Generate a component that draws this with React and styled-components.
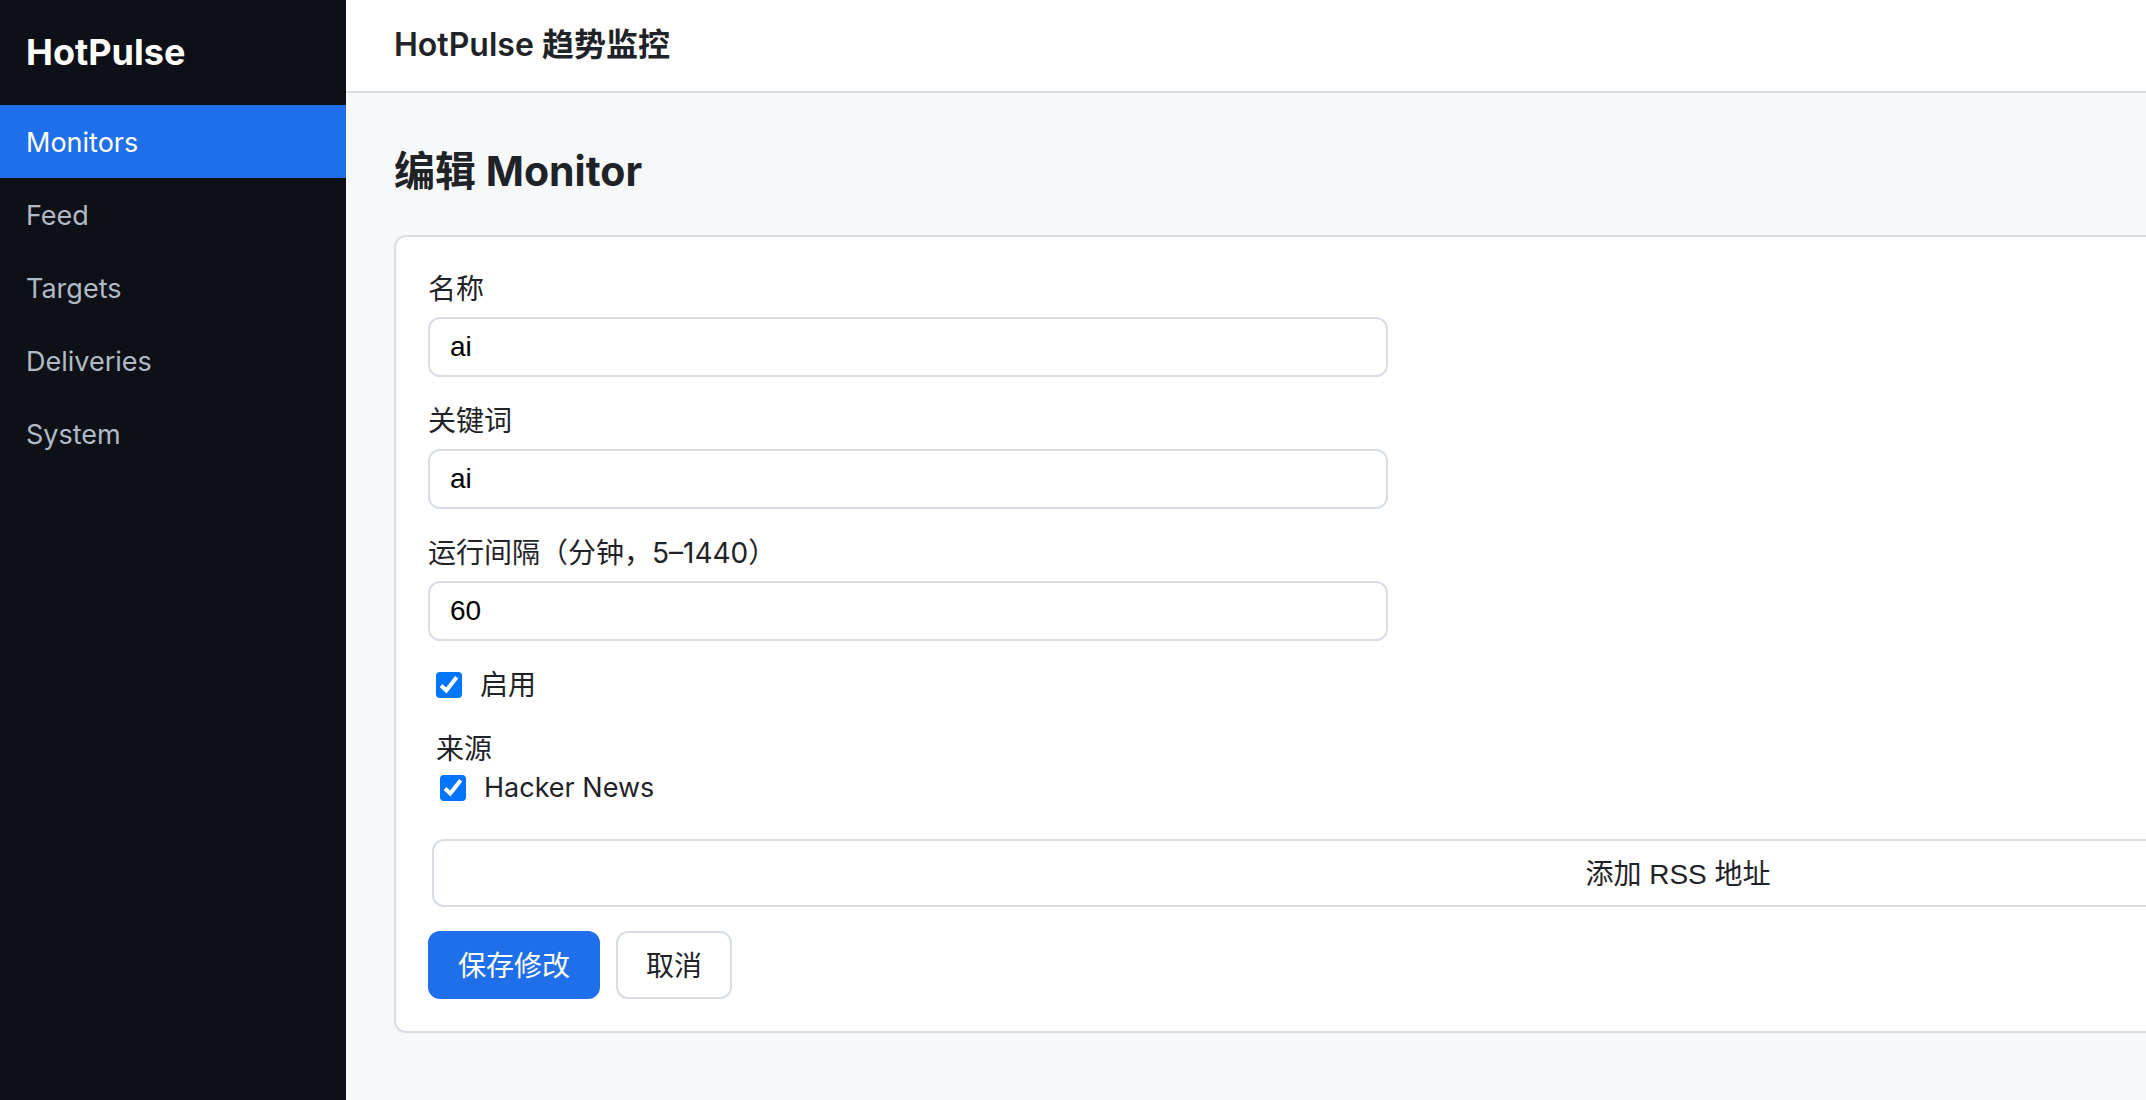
import React, { useState } from 'react';
import styled, { createGlobalStyle } from 'styled-components';

const GlobalStyle = createGlobalStyle`
  * {
    box-sizing: border-box;
  }

  body {
    margin: 0;
    overflow-x: hidden;
    background: #f6f8fa;
    color: #1f2328;
    font-family: Inter, 'Noto Sans CJK SC', sans-serif;
    font-size: 28px;
    line-height: 40px;
  }
`

const Layout = styled.div`
  display: flex;
  min-width: 3010px;
  min-height: 100vh;
`

const Sidebar = styled.aside`
  flex: 0 0 346px;
  background: #0d1117;
`

const Brand = styled.div`
  padding: 32px 26px;
  color: #fff;
  font-size: 36px;
  font-weight: 700;
  line-height: 41px;
`

const NavLink = styled.a`
  display: block;
  padding: 17px 26px 15px;
  background: ${props => (props.$active ? '#1f6feb' : 'transparent')};
  color: ${props => (props.$active ? '#fff' : '#b1bac4')};
  font-size: 27px;
  line-height: 41px;
  text-decoration: none;
`

const Main = styled.div`
  flex: 1;
`

const Header = styled.header`
  padding: 23px 48px 25px;
  border-bottom: 2px solid #d8dee4;
  background: #fff;
  font-size: 32px;
  font-weight: 600;
  line-height: 43px;
`

const Content = styled.main`
  padding: 48px;
`

const Title = styled.h1`
  margin: 0 0 34px;
  font-size: 41px;
  font-weight: 700;
  line-height: 60px;
`

const Card = styled.form`
  display: flex;
  flex-direction: column;
  gap: 24px;
  padding: 32px;
  border: 2px solid #d8dee4;
  border-radius: 12px;
  background: #fff;
`

const Field = styled.label`
  display: grid;
  gap: 8px;
  max-width: 960px;
`

const Input = styled.input`
  width: 100%;
  height: 60px;
  padding: 0 20px;
  border: 2px solid #d8dee4;
  border-radius: 12px;
  background: #fff;
  color: #000;
  font-family: 'Liberation Sans', 'Noto Sans CJK SC', sans-serif;
  font-size: 28px;
  appearance: textfield;

  &::-webkit-inner-spin-button {
    display: none;
  }
`

const CheckRow = styled.label`
  display: flex;
  align-items: center;
  gap: 12px;
`

const Checkbox = styled.input`
  width: 26px;
  height: 26px;
  margin: 0 6px 0 8px;
  border: 2px solid #767676;
  border-radius: 4px;
  background: #fff;
  appearance: none;

  &:checked {
    border: 0;
    background: #0075ff url("data:image/svg+xml,%3Csvg xmlns='http://www.w3.org/2000/svg' viewBox='0 0 26 26'%3E%3Cpath d='M5 13.5L10.3 18.5L20.7 5.3' fill='none' stroke='white' stroke-width='4'/%3E%3C/svg%3E");
  }
`

const Sources = styled.fieldset`
  display: grid;
  margin: 0 4px;
  padding: 0;
  border: 0;
`

const Legend = styled.legend`
  padding: 0 4px;
`

const SourceList = styled.div`
  margin-bottom: 32px;
  font-size: 27px;
  line-height: 38px;
`

const Button = styled.button`
  height: 68px;
  padding: 0 28px 2px;
  border: 2px solid ${props => (props.$primary ? '#1f6feb' : '#d8dee4')};
  border-radius: 12px;
  background: ${props => (props.$primary ? '#1f6feb' : '#fff')};
  color: ${props => (props.$primary ? '#fff' : '#1f2328')};
  font-family: 'Liberation Sans', 'Noto Sans CJK SC', sans-serif;
  font-size: 28px;
`

const Actions = styled.div`
  display: flex;
  gap: 16px;
`

const links = ['Monitors', 'Feed', 'Targets', 'Deliveries', 'System'];

function App() {
  const [name, setName] = useState('ai');
  const [keyword, setKeyword] = useState('ai');
  const [minutes, setMinutes] = useState('60');

  return (
    <Layout>
      <GlobalStyle />
      <Sidebar>
        <Brand>HotPulse</Brand>
        <nav>
          {links.map(link => (
            <NavLink key={link} href={`#${link.toLowerCase()}`} $active={link === 'Monitors'}>{link}</NavLink>
          ))}
        </nav>
      </Sidebar>
      <Main>
        <Header>HotPulse 趋势监控</Header>
        <Content>
          <Title>编辑 Monitor</Title>
          <Card>
            <Field>
              名称
              <Input type="text" value={name} onChange={e => setName(e.target.value)} />
            </Field>
            <Field>
              关键词
              <Input type="text" value={keyword} onChange={e => setKeyword(e.target.value)} />
            </Field>
            <Field>
              运行间隔（分钟，5–1440）
              <Input type="number" min="5" max="1440" value={minutes} onChange={e => setMinutes(e.target.value)} />
            </Field>
            <CheckRow>
              <Checkbox type="checkbox" defaultChecked />
              启用
            </CheckRow>
            <Sources>
              <Legend>来源</Legend>
              <SourceList>
                <CheckRow>
                  <Checkbox type="checkbox" defaultChecked />
                  Hacker News
                </CheckRow>
              </SourceList>
              <Button type="button">添加 RSS 地址</Button>
            </Sources>
            <Actions>
              <Button type="submit" $primary>保存修改</Button>
              <Button type="button">取消</Button>
            </Actions>
          </Card>
        </Content>
      </Main>
    </Layout>
  );
}

export default App;
